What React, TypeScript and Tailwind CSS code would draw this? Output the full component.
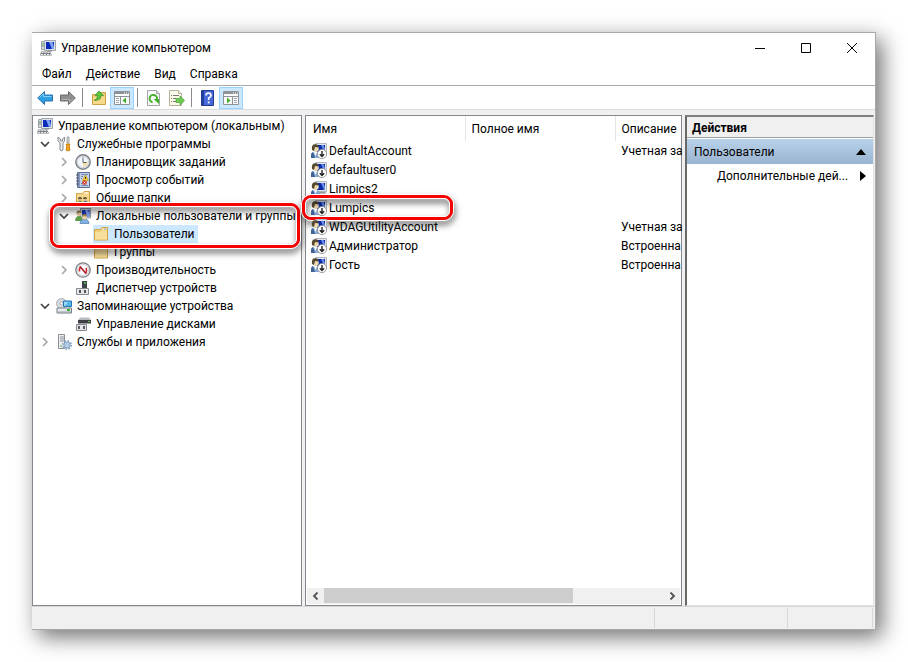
import React from 'react'

const Computer = () => (
  <svg viewBox="0 0 16 16" className="w-4 h-4 shrink-0" aria-hidden="true">
    <path d="M1.500 1.500h4v8h-4z" fill="#d9dcdf" stroke="#9ba0a6" />
    <path d="M4.500.500h11v10h-11z" fill="#e0e4ea" stroke="#9ea4ac" />
    <path d="M6 2h8v7H6z" fill="#0a2ab8" />
    <path d="M9 2h3.500l1.500 5v2h-2z" fill="#7ea2f2" />
    <path d="M8 10h4v1.500H8z" fill="#8d9299" />
    <path d="M1 11.500h9l2 4H0z" fill="#7d8287" />
    <path d="M1.500 12.500h8M1 14.500h10" stroke="#e3e5e7" strokeDasharray="2 1" />
    <path d="M2 4h2" stroke="#3fae45" />
    <path d="M2 6h2" stroke="#7d8287" />
  </svg>
)

const Tools = () => (
  <svg viewBox="0 0 16 16" className="w-4 h-4 shrink-0" aria-hidden="true">
    <path d="M2 1v4l2 2v7q1 2 3 0V7l1.500-2V1L6.500 3v2h-2V3z" fill="#e9ebed" stroke="#7c8288" strokeWidth=".9" />
    <path d="M11 1h2v6h-2z" fill="#d5d8db" stroke="#868b91" strokeWidth=".7" />
    <path d="M10 8h4l-.8 2 .8 4q-2 2-4 0l.8-4z" fill="#f3a712" stroke="#bd7508" strokeWidth=".8" />
  </svg>
)

const Clock = () => (
  <svg viewBox="0 0 16 16" className="w-4 h-4 shrink-0" aria-hidden="true">
    <circle cx="8" cy="8" r="7.200" fill="#dfe3e8" stroke="#7d8186" strokeWidth="1.400" />
    <circle cx="8" cy="8" r="5.500" fill="#f4f8fc" stroke="#c1c7cf" strokeWidth=".7" />
    <path d="M8 8h5A5 5 0 0 1 8 13z" fill="#f3dfae" />
    <path d="M8 3.500V8.500h3.500" fill="none" stroke="#55636f" />
  </svg>
)

const EventLog = () => (
  <svg viewBox="0 0 16 16" className="w-4 h-4 shrink-0" aria-hidden="true">
    <path d="M2.500.500h12v15h-12z" fill="#c4d3ec" stroke="#5b6c93" />
    <path d="M3 1h2v14H3z" fill="#8797bb" />
    <path d="M1 3h3M1 6h3M1 9h3M1 12h3" stroke="#555d70" />
    <path d="M6 2.500h7M6 4.500h2M6 6.500h1M6 13.500h7M6 11.500h2" stroke="#7488b3" />
    <path d="M10.500 3 13.500 8.500h-6z" fill="#ffd735" stroke="#b78a00" strokeWidth=".6" />
    <path d="M10.500 5v2" stroke="#3b3210" />
    <circle cx="9.500" cy="10.500" r="2.300" fill="#d92b20" />
    <path d="m8.500 9.500 2 2m0-2-2 2" stroke="#fff" strokeWidth=".8" />
  </svg>
)

const Folder = () => (
  <svg viewBox="0 0 16 16" className="w-4 h-4 shrink-0" aria-hidden="true">
    <path d="M1.500 3.500h6l1.500-2h5.500v12.500h-13z" fill="#f0cf7d" stroke="#d2a547" />
    <path d="M9.500 3h4" stroke="#fff" />
    <path d="M11 3h2" stroke="#6ea4d8" />
    <path d="M2 6h6l1.500-1.500H14V13.500H2z" fill="#f9df9c" />
  </svg>
)

const SharedFolder = () => (
  <svg viewBox="0 0 16 16" className="w-4 h-4 shrink-0" aria-hidden="true">
    <path d="M1.500 3.500h6l1.500-2h5.500v12h-13z" fill="#f5d88c" stroke="#d2a547" />
    <path d="M9.500 3h4" stroke="#fff" />
    <path d="M3 9q0-2 2-2t2 2zM8 9q0-2 2-2t2 2z" fill="#4a4330" />
    <circle cx="5" cy="10" r="1.500" fill="#d9b184" />
    <circle cx="10" cy="10" r="1.500" fill="#d9b184" />
    <path d="M2 15q0-4 3-4t3 4z" fill="#649f4b" />
    <path d="M7.500 15q0-4 3-4t3 4z" fill="#4f79b8" />
  </svg>
)

const Users = () => (
  <svg viewBox="0 0 16 16" className="w-4 h-4 shrink-0" aria-hidden="true">
    <path d="M5.500.500h10v9.500h-10z" fill="#d2dae6" stroke="#8c96a8" />
    <path d="M7 2h7.500v6.500H7z" fill="#1434b4" />
    <path d="M10 2h3l1.500 4.500v2H12z" fill="#7f9fec" />
    <path d="M0 13q.5-5 4-5t4 5z" fill="#5e9f49" />
    <circle cx="4" cy="5.500" r="2.500" fill="#e0c79c" />
    <path d="M1.500 5.500Q1.500 2.500 4 2.500T6.500 5L4 4.500z" fill="#8b7645" />
    <path d="M5 15.500q.5-4.500 4.500-4.500t4.500 4.500z" fill="#82b0de" stroke="#3e6ca4" strokeWidth=".6" />
    <circle cx="9.500" cy="9" r="2.500" fill="#ead0a5" />
    <path d="M7 9Q7 6 9.500 6T12 8.500L9.500 8z" fill="#a08850" />
  </svg>
)

const Gauge = () => (
  <svg viewBox="0 0 16 16" className="w-4 h-4 shrink-0" aria-hidden="true">
    <circle cx="8" cy="8" r="7.200" fill="#e9ebec" stroke="#7f8387" strokeWidth="1.300" />
    <circle cx="8" cy="8" r="5.500" fill="#fff" stroke="#c3c6c9" strokeWidth=".8" />
    <path d="M4.500 9.500Q4 6 6 5M10 11.500Q12.500 9 11 6" fill="none" stroke="#d3222a" strokeWidth="1.500" />
    <path d="m5 4.500 6 7" stroke="#d3222a" strokeWidth="1.600" />
    <path d="m5 4.500 6 7" stroke="#2f3336" strokeWidth=".5" />
  </svg>
)

const Device = () => (
  <svg viewBox="0 0 16 16" className="w-4 h-4 shrink-0" aria-hidden="true">
    <path d="M7 1h5v8H7z" fill="#3e4347" />
    <path d="M9 2h2v2H9z" fill="#4faf51" />
    <path d="M1.500 8.500h12v6h-12z" fill="#e4e6e8" stroke="#85898d" />
    <path d="M4 10h2v3H4zM9 10h2v3H9z" fill="#515559" />
  </svg>
)

const Storage = () => (
  <svg viewBox="0 0 16 16" className="w-4 h-4 shrink-0" aria-hidden="true">
    <circle cx="5.500" cy="5.500" r="5" fill="#d8dcdf" stroke="#9a9ea3" strokeWidth=".8" />
    <circle cx="5.500" cy="5.500" r="1.500" fill="#fff" stroke="#888c91" strokeWidth=".7" />
    <path d="M7.500 3h8v5.500h-8z" fill="#57b4ea" stroke="#2677b3" />
    <path d="M8 4h4l-3 4H8z" fill="#9ed6f7" />
    <path d="M1 10h14.500v5H1z" fill="#e7eaec" stroke="#777c81" />
    <path d="M2 14h13" stroke="#9ca1a5" />
    <path d="M11 12h3" stroke="#35b234" strokeWidth="2" />
  </svg>
)

const Disk = () => (
  <svg viewBox="0 0 16 16" className="w-4 h-4 shrink-0" aria-hidden="true">
    <path d="m3 4 2-2.500h9L16 4v3H3z" fill="#b8bcc0" />
    <path d="M3 4h13v3.500H3z" fill="#3b3f43" />
    <path d="M13 5.500h2" stroke="#5fca5b" />
    <path d="M1.500 8.500h10v6h-10z" fill="#e4e6e8" stroke="#85898d" />
    <path d="M3 10h2v3H3zM8 10h2v3H8z" fill="#56595d" />
  </svg>
)

const Services = () => (
  <svg viewBox="0 0 16 16" className="w-4 h-4 shrink-0" aria-hidden="true">
    <path d="M2.500.500h6v14h-6z" fill="#eceef0" stroke="#8b9095" />
    <path d="M4 3h4M4 5h4M4 7h4" stroke="#8e9499" />
    <path d="M4 12h2" stroke="#49ab44" />
    <circle cx="11" cy="11" r="4.300" fill="none" stroke="#7899c0" strokeWidth="1.400" strokeDasharray="1.600 1.780" />
    <circle cx="11" cy="11" r="3.200" fill="#c3d9f1" stroke="#7899c0" />
    <circle cx="11" cy="11" r="1.200" fill="#fff" stroke="#7899c0" strokeWidth=".7" />
  </svg>
)

const UserIcon = ({ disabled }: { disabled: boolean }) => (
  <svg viewBox="0 0 16 16" className="w-4 h-4 shrink-0" aria-hidden="true">
    <path d="M4.500.500h11v10h-11z" fill="#e3e7ed" stroke="#b0b6bf" />
    <path d="M6 2h8v7H6z" fill="#0c2aa8" />
    <path d="M10 2h2.500L14 6v3h-1z" fill="#6a8fe8" />
    <path d="M9 11h5v1H9z" fill="#9da2a8" />
    <path d="M0 15v-3q0-3 4-3t5 3v3z" fill="#87a9d6" />
    <path d="M0 15v-3q0-2 2-3l2 6z" fill="#3f6196" />
    <path d="m3 9 1.500 4L6 9z" fill="#fff" />
    <circle cx="4.800" cy="5.800" r="3" fill="#ecd9ae" />
    <path d="M1 7Q0 1 4.500 1.200 8 1.500 7.500 4.500L4 4 3 8z" fill="#55492f" />
    {disabled ? (
      <>
        <circle cx="11" cy="11" r="4.600" fill="#fff" stroke="#85898d" strokeWidth=".8" />
        <path d="M11 8v5M8.800 11.200l2.200 2.200 2.200-2.200" fill="none" stroke="#222" strokeWidth="1.400" />
      </>
    ) : (
      <path d="M9 13.500h6M8 12h7" stroke="#8d9299" />
    )}
  </svg>
)

const Arrow = ({ back }: { back?: boolean }) => (
  <svg viewBox="0 0 16 16" className={back ? 'w-4 h-4' : 'w-4 h-4 rotate-180'} aria-hidden="true">
    <path
      d="M.7 8 7.500 1.500V5h8v6h-8v3.500z"
      fill={back ? '#2f9fe6' : '#8f8f8f'}
      stroke={back ? '#2a6fa5' : '#686868'}
    />
    <path d="M2.500 7.500 6.500 3.500V6.500h8" fill="none" stroke={back ? '#7fd0fb' : '#b0b0b0'} />
  </svg>
)

const FolderUp = () => (
  <svg viewBox="0 0 16 16" className="w-4 h-4" aria-hidden="true">
    <path d="M1.500 4.500h6l2-2h5v12h-13z" fill="#f0cd78" stroke="#cda145" />
    <path d="M2 7h12v7H2z" fill="#f7d98c" />
    <path d="M3 10.500q3.500-1 3.500-5H4l4-4.500 4.500 4.500H10q0 4-3 4.500z" fill="#5cc43f" stroke="#36902a" strokeWidth=".7" />
  </svg>
)

const Pane = ({ right }: { right?: boolean }) => (
  <svg viewBox="0 0 16 16" className="w-4 h-4" aria-hidden="true">
    <path d="M.500 1.500h15v13H.500z" fill="#fafafa" stroke="#8c9298" />
    <path d="M1 2h14v2H1z" fill="#8c9298" />
    <path d="M10 3h1M12 3h1M14 3h1" stroke="#fff" />
    <path d="M1 6.500h14" stroke="#8c9298" />
    {right ? (
      <>
        <path d="M9.500 7v7" stroke="#8c9298" />
        <path d="M11 8.500h3M11 10.500h3M11 12.500h3" stroke="#a5aab0" />
        <path d="m4 7.500 3.500 3L4 13.500z" fill="#43b02a" />
      </>
    ) : (
      <>
        <path d="M6.500 7v7" stroke="#8c9298" />
        <path d="M2 8.500h3M2 10.500h3M2 12.500h3" stroke="#a5aab0" />
        <path d="M12 7.500l-3.500 3 3.500 3z" fill="#43b02a" />
      </>
    )}
  </svg>
)

const Refresh = () => (
  <svg viewBox="0 0 16 16" className="w-4 h-4" aria-hidden="true">
    <path d="M1.500.500h9l3 3v12h-12z" fill="#fafafa" stroke="#a0a4a8" />
    <path d="M10.500.500v3h3" fill="#e4e6e8" stroke="#a0a4a8" />
    <path d="M6.500 12.200A3.700 3.700 0 1 1 11 9" fill="none" stroke="#43b02a" strokeWidth="2" />
    <path d="M7.500 9H13v5z" fill="#43b02a" />
  </svg>
)

const Export = () => (
  <svg viewBox="0 0 16 16" className="w-4 h-4" aria-hidden="true">
    <path d="M.500.500h9l3 3v12h-12z" fill="#fdf9e9" stroke="#b5b09b" />
    <path d="M9.500.500v3h3" fill="#eee" stroke="#b5b09b" />
    <path d="M2 5.500h1M2 8.500h1M2 11.500h1M4 5.500h6M4 8.500h3M4 11.500h3" stroke="#777" />
    <path d="M7 8.500h4V6l4.700 4.500L11 15v-2.500H7z" fill="#6ccc4f" stroke="#4da53e" strokeWidth=".7" />
  </svg>
)

const Help = () => (
  <svg viewBox="0 0 16 16" className="w-4 h-4" aria-hidden="true">
    <path d="M1.500.500h12v15h-12z" fill="#4668d8" stroke="#233c91" />
    <path d="M2 1h2v14H2z" fill="#233f9f" />
    <path d="M6 5.500Q6 3 8.500 3T11 5.500Q11 7 8.700 8v2" fill="none" stroke="#fff" strokeWidth="1.700" />
    <path d="M7.800 11.500h1.800v1.800H7.800z" fill="#fff" />
  </svg>
)

const Chevron = ({ open }: { open?: boolean }) => (
  <svg viewBox="0 0 10 10" className="w-[10px] h-[10px]" aria-hidden="true">
    {open ? (
      <path d="m1 3 4 4 4-4" fill="none" stroke="#404040" strokeWidth="1.600" />
    ) : (
      <path d="m3 1 4 4-4 4" fill="none" stroke="#a3a3a3" strokeWidth="1.500" />
    )}
  </svg>
)

type RowProps = {
  label: string
  icon: React.ReactNode
  pad: string
  open?: boolean
  leaf?: boolean
  selected?: boolean
}

const TreeRow = ({ label, icon, pad, open, leaf, selected }: RowProps) => (
  <div className={`flex items-center h-[18px] ${pad}`} role="treeitem" aria-selected={!!selected}>
    {leaf ? (
      <span className="w-4 shrink-0" />
    ) : (
      <button type="button" aria-label={label} className="w-4 shrink-0">
        <Chevron open={open} />
      </button>
    )}
    <span className={selected ? 'flex items-center h-[18px] bg-[#cce8ff] pr-[3px]' : 'flex items-center'}>
      {icon}
      <span className="ml-[5px] whitespace-nowrap">{label}</span>
    </span>
  </div>
)

const Callout = ({ place }: { place: string }) => (
  <div
    className={`absolute pointer-events-none rounded-[10px] border border-white drop-shadow-[1px_4px_3px_rgba(0,0,0,0.6)] ${place}`}
  >
    <div className="h-full rounded-[9px] border-3 border-[#f70000]">
      <div className="h-full rounded-md border border-white" />
    </div>
  </div>
)

const Tree = () => (
  <div className="w-[270px] shrink-0 border border-[#828790] bg-white pt-px" role="tree">
    <div className="flex items-center h-[18px] pl-1">
      <Computer />
      <span className="ml-[5px] whitespace-nowrap">Управление компьютером (локальным)</span>
    </div>
    <TreeRow pad="pl-[7px]" open icon={<Tools />} label="Служебные программы" />
    <TreeRow pad="pl-[26px]" icon={<Clock />} label="Планировщик заданий" />
    <TreeRow pad="pl-[26px]" icon={<EventLog />} label="Просмотр событий" />
    <TreeRow pad="pl-[26px]" icon={<SharedFolder />} label="Общие папки" />
    <div className="relative">
      <TreeRow pad="pl-[26px]" open icon={<Users />} label="Локальные пользователи и группы" />
      <TreeRow pad="pl-11" leaf selected icon={<Folder />} label="Пользователи" />
      <Callout place="left-4 right-0 -top-[5px] -bottom-1.5" />
    </div>
    <TreeRow pad="pl-11" leaf icon={<Folder />} label="Группы" />
    <TreeRow pad="pl-[26px]" icon={<Gauge />} label="Производительность" />
    <TreeRow pad="pl-[26px]" leaf icon={<Device />} label="Диспетчер устройств" />
    <TreeRow pad="pl-[7px]" open icon={<Storage />} label="Запоминающие устройства" />
    <TreeRow pad="pl-[26px]" leaf icon={<Disk />} label="Управление дисками" />
    <TreeRow pad="pl-[7px]" icon={<Services />} label="Службы и приложения" />
  </div>
)

const users = [
  { name: 'DefaultAccount', note: 'Учетная за', disabled: true },
  { name: 'defaultuser0', note: '', disabled: true },
  { name: 'Limpics2', note: '', disabled: false },
  { name: 'Lumpics', note: '', disabled: true, marked: true },
  { name: 'WDAGUtilityAccount', note: 'Учетная за', disabled: true },
  { name: 'Администратор', note: 'Встроенна', disabled: true },
  { name: 'Гость', note: 'Встроенна', disabled: true },
]

const UserList = () => (
  <div className="flex flex-col flex-1 min-w-0 border border-[#828790] bg-white">
    <div className="flex-1">
      <table className="table-fixed w-full text-left">
        <thead>
          <tr className="h-[25px]">
            <th className="w-[159px] border-r border-[#e5e5e5] p-0 pl-[7px] font-normal">Имя</th>
            <th className="w-[150px] border-r border-[#e5e5e5] p-0 pl-[6px] font-normal">Полное имя</th>
            <th className="p-0 pl-[6px] font-normal whitespace-nowrap">Описание</th>
          </tr>
        </thead>
        <tbody>
          {users.map((user) => (
            <tr key={user.name} className="h-[19px]">
              <td className="relative p-0 pl-[5px]">
                <div className="flex items-center h-[19px]">
                  <UserIcon disabled={user.disabled} />
                  <span className="ml-[2px]">{user.name}</span>
                </div>
                {user.marked && <Callout place="-left-[5px] right-[11px] -top-1 -bottom-1" />}
              </td>
              <td className="p-0" />
              <td className="p-0 pl-[6px] whitespace-nowrap">{user.note}</td>
            </tr>
          ))}
        </tbody>
      </table>
    </div>
    <div className="flex items-center h-4 mx-px mb-px bg-[#f0f0f0]">
      <button type="button" aria-label="Влево" className="w-[17px] flex justify-center">
        <svg viewBox="0 0 8 8" className="w-2 h-2">
          <path d="M5.500.500 2 4l3.500 3.500" fill="none" stroke="#505050" strokeWidth="1.800" />
        </svg>
      </button>
      <div className="flex-1 h-full">
        <div className="w-[73.5%] h-[15px] bg-[#cdcdcd]" />
      </div>
      <button type="button" aria-label="Вправо" className="w-[17px] flex justify-center">
        <svg viewBox="0 0 8 8" className="w-2 h-2">
          <path d="M2.500.500 6 4 2.500 7.500" fill="none" stroke="#505050" strokeWidth="1.800" />
        </svg>
      </button>
    </div>
  </div>
)

const Actions = () => (
  <div className="w-[189px] shrink-0 border-t-2 border-l-2 border-r border-b border-t-[#808080] border-l-[#696969] border-r-[#e3e3e3] border-b-[#e3e3e3] bg-white">
    <h2 className="h-[21px] flex items-center pt-px pl-[5px] font-bold bg-[#f0f0f0] border-b border-[#a0a0a0]">
      Действия
    </h2>
    <button
      type="button"
      className="mt-px w-full h-[25px] flex items-center justify-between px-[7px] bg-linear-to-b from-[#b9d1ea] to-[#99b4d1]"
    >
      Пользователи
      <svg viewBox="0 0 10 6" className="w-[10px] h-[6px]">
        <path d="M5 0l5 6H0z" />
      </svg>
    </button>
    <button type="button" className="w-full h-6 flex items-center justify-between pl-[30px] pr-[7px]">
      Дополнительные дей...
      <svg viewBox="0 0 6 10" className="w-[6px] h-[10px]">
        <path d="M0 0l6 5-6 5z" />
      </svg>
    </button>
  </div>
)

const Divider = () => <span className="w-px h-[19px] ml-[3px] mr-1 bg-[#8c8c8c]" />

const toolButton = 'w-[23px] h-[22px] flex items-center justify-center'
const toolButtonOn = 'w-6 h-[22px] flex items-center justify-center bg-[#cce8ff] border border-[#99d1ff]'

const Toolbar = () => (
  <div className="flex items-center h-6 pl-px border-b border-[#dadada]">
    <button type="button" aria-label="Назад" className={toolButton}><Arrow back /></button>
    <button type="button" aria-label="Вперед" className={toolButton}><Arrow /></button>
    <Divider />
    <button type="button" aria-label="Вверх" className={toolButton}><FolderUp /></button>
    <button type="button" aria-label="Дерево консоли" className={toolButtonOn}><Pane /></button>
    <Divider />
    <button type="button" aria-label="Обновить" className={toolButton}><Refresh /></button>
    <button type="button" aria-label="Экспорт" className={toolButton}><Export /></button>
    <Divider />
    <button type="button" aria-label="Справка" className={toolButton}><Help /></button>
    <button type="button" aria-label="Панель действий" className={toolButtonOn}><Pane right /></button>
  </div>
)

const App = () => (
  <div className="h-screen min-h-96 p-8 bg-white text-black text-[12px] leading-[18px] font-['Roboto','Noto_Sans',sans-serif]">
    <div className="h-full flex flex-col border-y border-r border-[#a9a9a9] bg-[#f0f0f0] shadow-[6px_7px_21px_rgba(0,0,0,0.56)]">
      <header className="bg-white">
        <div className="flex items-center h-[30px] pl-2">
          <Computer />
          <h1 className="ml-[5px] flex-1">Управление компьютером</h1>
          <button type="button" aria-label="Свернуть" className="w-[46px] flex justify-center">
            <svg viewBox="0 0 10 10" className="w-[10px] h-[10px]">
              <path d="M0 5.500h10" stroke="#000" />
            </svg>
          </button>
          <button type="button" aria-label="Развернуть" className="w-[46px] flex justify-center">
            <svg viewBox="0 0 10 10" className="w-[10px] h-[10px]">
              <path d="M.500.500h9v9h-9z" fill="none" stroke="#000" />
            </svg>
          </button>
          <button type="button" aria-label="Закрыть" className="w-[46px] flex justify-center">
            <svg viewBox="0 0 10 10" className="w-[10px] h-[10px]">
              <path d="m0 0 10 10M10 0 0 10" stroke="#000" />
            </svg>
          </button>
        </div>
        <nav className="flex items-center gap-3.5 h-[23px] pl-[10px] border-b border-[#a9a9ad]">
          <button type="button">Файл</button>
          <button type="button">Действие</button>
          <button type="button">Вид</button>
          <button type="button">Справка</button>
        </nav>
        <Toolbar />
      </header>
      <main className="flex flex-1 min-h-0 gap-[3px] pt-[5px] pr-px">
        <Tree />
        <UserList />
        <Actions />
      </main>
      <footer className="flex justify-end h-[23px] pt-px pb-px pr-[2px] border-t border-[#d7d7d7]">
        <span className="w-[133px] border-l border-[#d7d7d7]" />
        <span className="w-[86px] border-x border-[#d7d7d7]" />
      </footer>
    </div>
  </div>
)

export default App
